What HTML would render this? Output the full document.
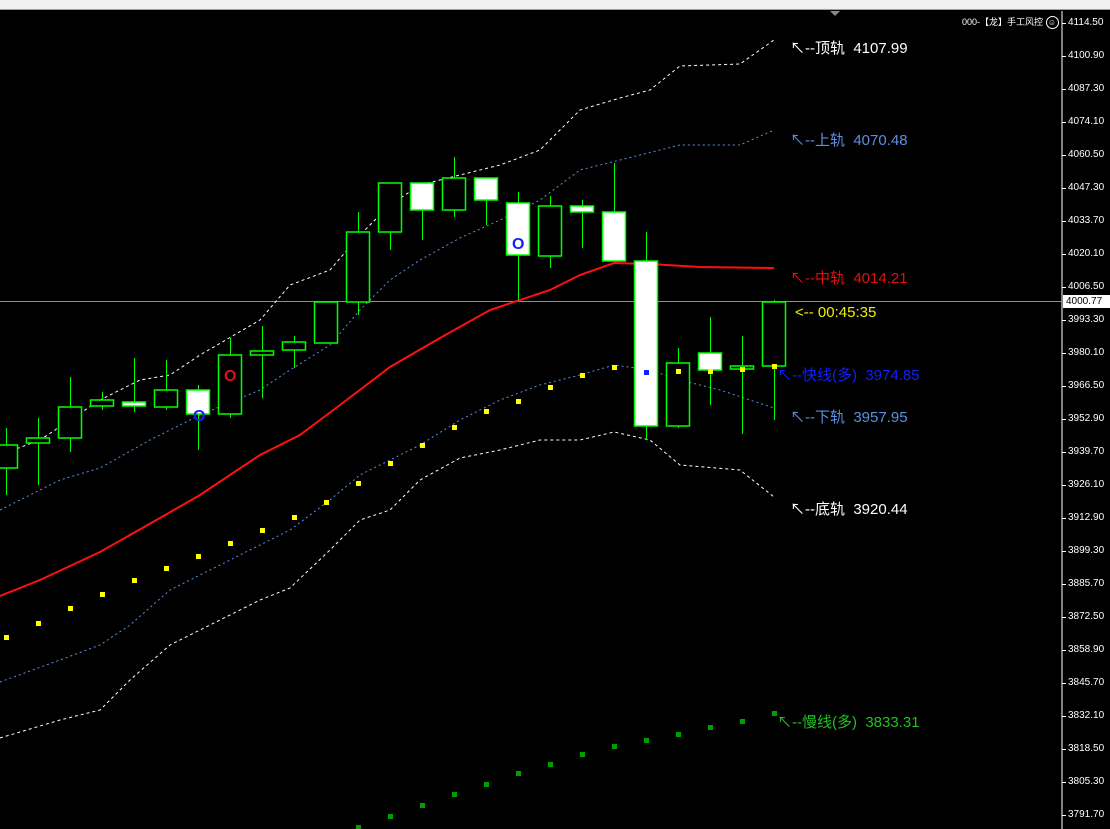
<!DOCTYPE html>
<html><head><meta charset="utf-8">
<style>
html,body{margin:0;padding:0;background:#000;width:1110px;height:829px;overflow:hidden;font-family:"Liberation Sans","Noto Sans CJK SC",sans-serif}
#top{position:absolute;left:0;top:0;width:1110px;height:9px;background:#f0f0f0;border-bottom:1px solid #a0a0a0}
.ax{position:absolute;left:1068px;font-size:10px;color:#fff;line-height:12px}
.lb{position:absolute;left:790px;font-size:15px;line-height:18px;white-space:pre}
</style></head><body>
<div id="top"></div>
<svg id="s" width="1110" height="829" style="position:absolute;left:0;top:0">
<polygon points="830,11 840,11 835,16" fill="#888"/>
<line x1="1062" y1="11" x2="1062" y2="829" stroke="#fff" stroke-width="1"/>
<line x1="0" y1="301.5" x2="1062" y2="301.5" stroke="#8090b0" stroke-width="1"/>
<g id="g"></g>
</svg>
<div style="position:absolute;left:962px;top:15px;font-size:9px;color:#fff;white-space:nowrap">000-【龙】手工风控 <span style="display:inline-block;width:11px;height:11px;border:1px solid #fff;border-radius:50%;font-size:8px;line-height:11px;text-align:center;vertical-align:middle">☺</span></div>
<div style="position:absolute;left:1063px;top:295px;width:44px;height:13px;background:#fff;color:#000;font-size:10px;line-height:13px;padding-left:3px">4000.77</div>
<div id="axis"></div>
<div class="lb" style="top:40px;color:#fff">↖--顶轨  4107.99</div>
<div class="lb" style="top:132px;color:#5b8fe0">↖--上轨  4070.48</div>
<div class="lb" style="top:270px;color:#e01010">↖--中轨  4014.21</div>
<div class="lb" style="top:304px;left:795px;color:#f0f000">&lt;-- 00:45:35</div>
<div class="lb" style="top:367px;left:777px;color:#1020ff">↖--快线(多)  3974.85</div>
<div class="lb" style="top:409px;color:#5b8fe0">↖--下轨  3957.95</div>
<div class="lb" style="top:501px;color:#fff">↖--底轨  3920.44</div>
<div class="lb" style="top:714px;left:777px;color:#20c020">↖--慢线(多)  3833.31</div>
<div style="position:absolute;left:193px;top:408px;color:#1020ff;font-size:16px;font-weight:bold">O</div>
<div style="position:absolute;left:224px;top:368px;color:#e01010;font-size:16px;font-weight:bold">O</div>
<div style="position:absolute;left:512px;top:236px;color:#1020ff;font-size:16px;font-weight:bold">O</div>
<script>
var labs=["4114.50","4100.90","4087.30","4074.10","4060.50","4047.30","4033.70","4020.10","4006.50","3993.30","3980.10","3966.50","3952.90","3939.70","3926.10","3912.90","3899.30","3885.70","3872.50","3858.90","3845.70","3832.10","3818.50","3805.30","3791.70"];
var h="";labs.forEach(function(l,i){var y=23+33*i;h+='<div class="ax" style="top:'+(y-6)+'px">'+l+'</div><div style="position:absolute;left:1062px;top:'+y+'px;width:4px;height:1px;background:#fff"></div>';});
document.getElementById("axis").innerHTML=h;
var s="";
function pl(p,c,d,w){s+='<polyline fill="none" stroke="'+c+'" stroke-width="'+w+'" '+(d?'stroke-dasharray="'+d+'"':'')+' points="'+p+'"/>';}
pl("0,455 40,440 100,400 140,380 170,375 200,355 260,320 290,285 330,270 360,235 390,205 420,185 460,175 500,165 540,150 580,110 620,98 650,90 680,66 740,64 774,40","#fff","3,3",1);
pl("0,510 60,480 100,468 150,440 200,415 260,390 290,370 330,345 360,310 390,280 420,260 460,238 500,220 540,200 580,170 620,160 680,145 740,145 774,130","#5b8fe0","2,3",1);
pl("0,682 60,660 100,645 130,625 170,590 200,575 260,545 290,530 330,500 360,475 390,460 420,445 460,420 500,400 540,385 580,375 614,365 650,370 680,380 720,390 774,408","#5b8fe0","2,3",1);
pl("0,738 60,720 100,710 130,680 170,645 200,630 260,600 290,588 330,550 360,520 390,510 420,480 460,458 500,450 540,440 580,440 614,432 650,440 680,465 740,470 774,497","#fff","3,3",1);
pl("0,596 40,580 100,552 160,518 200,495 260,455 300,435 340,405 390,367 440,338 490,310 550,290 580,275 614,263 650,264 700,267 774,268","#ff1010","",2);
// candles: x, bodyTop, bodyBot, wickTop, wickBot, white
var c=[[6,445,468,428,495,0],[38,438,443,418,485,0],[70,407,438,377,452,0],[102,400,406,392,410,0],[134,402,406,358,412,1],[166,390,407,360,410,0],[198,390,414,385,450,1],[230,355,414,338,418,0],[262,351,355,326,398,0],[294,342,350,336,368,0],[326,302,343,302,343,0],[358,232,302,212,315,0],[390,183,232,183,250,0],[422,183,210,183,240,1],[454,178,210,157,217,0],[486,178,200,178,225,1],[518,203,255,192,300,1],[550,206,256,196,268,0],[582,206,212,200,248,1],[614,212,261,163,261,1],[646,261,426,232,440,1],[678,363,426,348,428,0],[710,353,370,317,405,1],[742,366,369,336,434,0],[774,302,366,300,420,0]];
c.forEach(function(k){s+='<line x1="'+(k[0]+.5)+'" y1="'+k[3]+'" x2="'+(k[0]+.5)+'" y2="'+k[4]+'" stroke="#00ff00" stroke-width="1"/>';
s+='<rect x="'+(k[0]-11.5)+'" y="'+k[1]+'" width="23" height="'+Math.max(k[2]-k[1],3)+'" fill="'+(k[5]?'#fff':'#000')+'" stroke="#00ff00" stroke-width="1.5"/>';});
var y=[[6,637],[38,623],[70,608],[102,594],[134,580],[166,568],[198,556],[230,543],[262,530],[294,517],[326,502],[358,483],[390,463],[422,445],[454,427],[486,411],[518,401],[550,387],[582,375],[614,367],[678,371],[710,371],[742,369],[774,366]];
y.forEach(function(p){s+='<rect x="'+(p[0]-2)+'" y="'+(p[1]-2)+'" width="5" height="5" fill="#ffff00"/>';});
s+='<rect x="644" y="370" width="5" height="5" fill="#1020ff"/>';
var g=[[358,827],[390,816],[422,805],[454,794],[486,784],[518,773],[550,764],[582,754],[614,746],[646,740],[678,734],[710,727],[742,721],[774,713]];
g.forEach(function(p){s+='<rect x="'+(p[0]-2)+'" y="'+(p[1]-2)+'" width="5" height="5" fill="#00a000"/>';});
document.getElementById("g").innerHTML=s;
</script>
</body></html>
